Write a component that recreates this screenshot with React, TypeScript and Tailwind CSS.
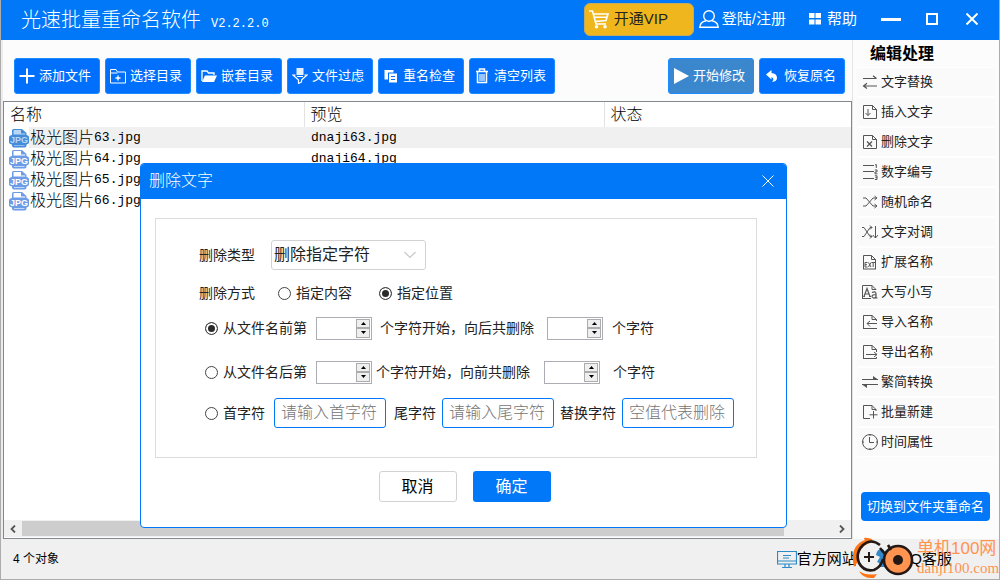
import { useState, type ReactNode } from "react";

const files = ["63", "64", "65", "66"];

function Glyph({ children, className = "size-4", box = "0 0 16 16" }: { children: ReactNode; className?: string; box?: string }) {
  return (
    <svg viewBox={box} className={`shrink-0 ${className}`} fill="none" stroke="currentColor" strokeWidth="1" aria-hidden="true">
      {children}
    </svg>
  );
}

function ToolButton({ icon, label, active = false }: { icon: ReactNode; label: string; active?: boolean }) {
  return (
    <button
      type="button"
      className={`flex h-9 w-[86px] items-center gap-1 rounded-[3px] border border-[#1a8cff] pl-1 text-[13px] whitespace-nowrap text-white ${active ? "bg-[#3a87cd]" : "bg-[#0070fc]"}`}
    >
      {icon}
      <span>{label}</span>
    </button>
  );
}

const page = <path d="M14.5 5.5V14.5H1.5V1.5H10.5L14.5 5.5H10.5V1.5" />;

const sideItems: { label: string; icon: ReactNode }[] = [
  {
    label: "文字替换",
    icon: <path d="M1 4.5H14.5M11 1.8L14.5 4.5M15 12H1.5M5 9.3L1.5 12L5 14.6" strokeWidth="1.2" />,
  },
  {
    label: "插入文字",
    icon: (
      <g>
        {page}
        <path d="M6 5V11.5M3.5 9L6 11.5L8.5 9" />
      </g>
    ),
  },
  {
    label: "删除文字",
    icon: (
      <g>
        {page}
        <path d="M5 7.5L10 12.5M10 7.5L5 12.5" strokeWidth="1.3" />
      </g>
    ),
  },
  {
    label: "数字编号",
    icon: (
      <g>
        <path d="M1 1.5H12M1 7.5H12M1 14.5H12" />
        <path d="M13 1L14.3 .5V4M12.8 6H15V8H13V9.8H15.4M12.8 11.8H15V15.5H12.8M13.4 13.6H15" />
      </g>
    ),
  },
  {
    label: "随机命名",
    icon: <path d="M1 4H4L11 12H15M1 12H4L11 4H15M12.5 2L15 4L12.5 6M12.5 10L15 12L12.5 14" />,
  },
  {
    label: "文字对调",
    icon: <path d="M0 3.5H2L8 12.5H10M0 12.5H2L8 3.5H10M8 1.5L10 3.5L8 5.5M8 10.5L10 12.5L8 14.5M13.5 2V14L10.8 11M13.5 14L16 11" />,
  },
  {
    label: "扩展名称",
    icon: (
      <g>
        <path d="M1.5 7V1.5H9.5L13.5 5.5V7M9.5 1.5V5.5H13.5M1 15H14" />
        <path d="M1.5 7V15M13.5 7V15M5.5 8.5H3V13H5.5M3 10.7H5M6.5 8.5L9 13M9 8.5L6.5 13M9.5 8.5H13M11.2 8.5V13" />
      </g>
    ),
  },
  {
    label: "大写小写",
    icon: (
      <g>
        <path d="M.5 14.5V1.5H10L14 5.5M10 1.5V5.5H14M0 14.5H9" />
        <path d="M2 12.5L5 4.5L8 12.5M3 10H7M1.2 12.5H3M7 12.5H9" strokeWidth="1.2" />
        <path d="M10 8.5Q13.5 6.8 14 9.5V14H15.5M14 10.5Q9.8 10.5 10 12.8Q11.5 15.2 14 13" strokeWidth="1.2" />
      </g>
    ),
  },
  {
    label: "导入名称",
    icon: <path d="M1.5 14.5V1.5H10L14.5 5.5V7M10 1.5V5.5H14.5M15 9.5H5M8 7L5 9.5L8 12.5M1 14.5H15" />,
  },
  {
    label: "导出名称",
    icon: <path d="M1.5 14.5V1.5H10L14.5 5.5V8M10 1.5V5.5H14.5M4 10.5H15M12 8L15 10.5L12 13M1 14.5H14.5V13" />,
  },
  {
    label: "繁简转换",
    icon: (
      <g>
        <path d="M0 5.5H16M0 10.5H16" />
        <path d="M11 2L16 5.5H11ZM5 14L0 10.5H5Z" fill="currentColor" stroke="none" />
      </g>
    ),
  },
  {
    label: "批量新建",
    icon: <path d="M8 14.5H1.5V1.5H10L14 5.5V7M10 1.5V5.5H14M11.5 7V14.5M7.5 10.8H15.5" />,
  },
  {
    label: "时间属性",
    icon: (
      <g>
        <circle cx="8" cy="8" r="7.5" />
        <path d="M7.5 3V8.5H12M8 .5V2M8 14V15.5M.5 8H2M14 8H15.5" />
      </g>
    ),
  },
];

function JpgIcon({ tinted }: { tinted: boolean }) {
  return (
    <svg viewBox="0 0 20 20" className="size-5 shrink-0" aria-hidden="true">
      <path
        d="M3 7V2.5Q3 1 4.5 1H13L17.5 5V7Q20 7.5 20 9V14.5Q20 16 17.5 16.5V17.5Q17.5 19.5 15.5 19.5H5Q3 19.5 3 17.5V16.5Q0 16 0 14.5V9Q0 7.5 3 7Z"
        fill={tinted ? "#458ddb" : "#6d9ce6"}
      />
      <path d="M4.5 6.5V2.5Q4.5 2 5 2H12V5.5H16.2V6.5Z" fill={tinted ? "#b9d7f3" : "#fff"} />
      <path d="M5 17.5H15.5" stroke={tinted ? "#8dbdec" : "#c4d9f8"} />
      <text x="10" y="15" textAnchor="middle" fontFamily="Liberation Sans, sans-serif" fontSize="9" fontWeight="700" fill={tinted ? "#b9d7f3" : "#fff"}>
        JPG
      </text>
    </svg>
  );
}

function Radio({ name, label, checked, onPick }: { name: string; label: string; checked: boolean; onPick: () => void }) {
  return (
    <label className="flex items-center gap-[5px] whitespace-nowrap">
      <input
        type="radio"
        name={name}
        checked={checked}
        onChange={onPick}
        className="size-[13px] shrink-0 appearance-none rounded-full border border-[#444] bg-white checked:bg-[#2b2b2b] checked:shadow-[inset_0_0_0_2px_white]"
      />
      {label}
    </label>
  );
}

function Spinner({ label }: { label: string }) {
  const [value, setValue] = useState("");
  const step = (by: number) => setValue(String(Math.max(0, Number(value || 0) + by)));
  return (
    <span className="flex h-[23px] w-14 shrink-0 border border-[#abadb3] bg-white p-px">
      <input aria-label={label} value={value} onChange={(e) => setValue(e.target.value)} className="min-w-0 flex-1 bg-transparent px-1 outline-none" />
      <span className="flex w-[14px] flex-col">
        <button type="button" aria-label="增加" onClick={() => step(1)} className="flex flex-1 items-center justify-center border border-[#acacac] bg-[#efefef]">
          <svg viewBox="0 0 5 3" className="h-[3px] w-[5px]"><path d="M0 3L2.5 0L5 3Z" /></svg>
        </button>
        <button type="button" aria-label="减少" onClick={() => step(-1)} className="flex flex-1 items-center justify-center border border-[#acacac] bg-[#efefef]">
          <svg viewBox="0 0 5 3" className="h-[3px] w-[5px]"><path d="M0 0L2.5 3L5 0Z" /></svg>
        </button>
      </span>
    </span>
  );
}

function BlueInput({ label, placeholder }: { label: string; placeholder: string }) {
  return (
    <input
      aria-label={label}
      placeholder={placeholder}
      className="h-[30px] w-28 shrink-0 rounded-[3px] border border-[#0078f8] bg-white px-[6px] text-base font-light outline-none placeholder:text-[#757575]"
    />
  );
}

function DeleteDialog() {
  const [mode, setMode] = useState("position");
  const [rule, setRule] = useState("front");
  return (
    <section role="dialog" aria-labelledby="dialog-title" className="absolute top-[163px] left-[139px] w-[647px] overflow-hidden rounded-[4px] border border-[#0078f8] bg-white">
      <header className="flex h-[35px] items-center justify-between bg-[#0078f8] pr-3 pb-[2px] pl-2 text-white">
        <h2 id="dialog-title" className="text-base font-light">删除文字</h2>
        <button type="button" aria-label="关闭">
          <svg viewBox="0 0 12 12" className="size-3" stroke="white" strokeWidth="1"><path d="M.5 .5L11.5 11.5M11.5 .5L.5 11.5" /></svg>
        </button>
      </header>
      <form onSubmit={(e) => e.preventDefault()} className="pt-[19px] pr-[29px] pb-[25px] pl-[14px]">
        <div className="border border-[#dcdcdc] pt-[21px] pb-[29px] pl-[43px] text-sm text-[#222]">
          <div className="flex h-[30px] items-center gap-4">
            <label htmlFor="kind">删除类型</label>
            <div className="relative flex h-[30px] w-[155px] items-center">
              <select id="kind" className="h-full w-full appearance-none rounded-[3px] border border-[#d2d2d2] bg-white px-[2px] text-base">
                <option>删除指定字符</option>
              </select>
              <svg viewBox="0 0 12 8" className="pointer-events-none absolute right-[10px] h-2 w-3" fill="none" stroke="#c8c8c8" strokeWidth="1.2"><path d="M.5 1L6 6.5L11.5 1" /></svg>
            </div>
          </div>
          <div className="mt-[13px] flex h-5 items-center">
            <span className="mr-[23px]">删除方式</span>
            <Radio name="mode" label="指定内容" checked={mode === "content"} onPick={() => setMode("content")} />
            <span className="w-[27px]" />
            <Radio name="mode" label="指定位置" checked={mode === "position"} onPick={() => setMode("position")} />
          </div>
          <div className="mt-[13px] flex h-6 items-center pl-[6px] whitespace-nowrap">
            <Radio name="rule" label="从文件名前第" checked={rule === "front"} onPick={() => setRule("front")} />
            <span className="mr-2 ml-[9px]"><Spinner label="前起始位置" /></span>
            <span>个字符开始，向后共删除</span>
            <span className="mr-[9px] ml-[13px]"><Spinner label="向后删除数量" /></span>
            <span>个字符</span>
          </div>
          <div className="mt-5 flex h-6 items-center pl-[6px] whitespace-nowrap">
            <Radio name="rule" label="从文件名后第" checked={rule === "back"} onPick={() => setRule("back")} />
            <span className="mr-1 ml-[9px]"><Spinner label="后起始位置" /></span>
            <span>个字符开始，向前共删除</span>
            <span className="mr-[13px] ml-[14px]"><Spinner label="向前删除数量" /></span>
            <span>个字符</span>
          </div>
          <div className="mt-[14px] flex h-[30px] items-center pl-[6px] whitespace-nowrap">
            <Radio name="rule" label="首字符" checked={rule === "edge"} onPick={() => setRule("edge")} />
            <span className="ml-[9px]"><BlueInput label="首字符" placeholder="请输入首字符" /></span>
            <span className="mr-[6px] ml-2">尾字符</span>
            <BlueInput label="尾字符" placeholder="请输入尾字符" />
            <span className="mx-[6px]">替换字符</span>
            <BlueInput label="替换字符" placeholder="空值代表删除" />
          </div>
        </div>
        <div className="mt-[13px] flex justify-center gap-4 pl-[17px]">
          <button type="button" className="h-[31px] w-[78px] rounded-[3px] border border-[#d2d2d2] bg-white text-base text-black">取消</button>
          <button type="submit" className="h-[31px] w-[78px] rounded-[3px] bg-[#0078f8] text-base text-white">确定</button>
        </div>
      </form>
    </section>
  );
}

function Watermark() {
  return (
    <div className="pointer-events-none absolute right-[2px] bottom-0 flex items-center gap-[3px] text-[#ff9350]">
      <svg viewBox="0 0 62 42" className="h-[42px] w-[62px]" fill="none" aria-hidden="true">
        <path d="M2 30Q-3 9 13 3Q9 -1 20 2L21 5Q6 8 5 26Z" fill="#ff7414" />
        <path d="M7 34Q14 39 25 37L22 41Q11 42 7 34Z" fill="#ff7414" />
        <path d="M24 18Q25 11 31 12L34 16L31 24L34 30H27Q29 26 25 25L28 20Z" fill="#3588c9" />
        <path d="M28 8Q19 1 11 8Q3 16 7 26Q12 35 22 33Q29 30 31 22" stroke="#231815" strokeWidth="2.6" />
        <path d="M12 20H22M17 15V25" stroke="#231815" strokeWidth="2" />
        <circle cx="46" cy="23" r="14" fill="#ff9350" stroke="#231815" strokeWidth="2.6" />
        <path d="M28 11L33 17M36 8L39 13" stroke="#231815" strokeWidth="2.6" />
        <circle cx="46" cy="23" r="5" fill="#231815" />
      </svg>
      <div className="w-20 whitespace-nowrap">
        <div className="text-[17px] leading-5">单机100网</div>
        <div className="font-['Liberation_Serif',serif] text-[15px] leading-[18px]">danji100.com</div>
      </div>
    </div>
  );
}

export default function App() {
  return (
    <div className="relative flex h-screen flex-col overflow-hidden border-x border-b border-[#acacac] bg-[#fcfcfc] font-['Liberation_Sans','Noto_Sans_CJK_SC',sans-serif] text-black">
      <header className="flex h-10 shrink-0 items-center bg-[#0078f8] pl-5 text-white">
        <h1 className="text-xl font-light whitespace-nowrap">光速批量重命名软件</h1>
        <span className="mt-2 ml-[10px] font-['Liberation_Mono',monospace] text-xs">V2.2.2.0</span>
        <nav className="ml-auto flex items-center pr-[21px] pb-[2px] text-[15px] whitespace-nowrap">
          <button type="button" className="flex h-[33px] w-[110px] items-center gap-[5px] rounded-[6px] border border-[#c5a95f] bg-[#efb71d] pl-1 text-[#222]">
            <svg viewBox="0 0 20 19" className="h-[19px] w-5" fill="none" stroke="#fff" strokeWidth="1.6">
              <path d="M0 1H3.5L7 14H17M4 4H19L17 10.5L6 11.5M4.7 7.3H18" />
              <circle cx="7.5" cy="16.8" r="1" />
              <circle cx="16" cy="16.8" r="1" />
            </svg>
            开通VIP
          </button>
          <button type="button" className="ml-[5px] flex items-center gap-[3px]">
            <Glyph className="size-5" box="0 0 20 20">
              <circle cx="10" cy="7" r="5.3" strokeWidth="1.4" />
              <path d="M7 11.8Q1 13 .8 18.2H19.2Q19 13 13 11.8" strokeWidth="1.4" />
            </Glyph>
            登陆/注册
          </button>
          <button type="button" className="ml-[23px] flex items-center gap-[6px]">
            <Glyph className="size-3" box="0 0 12 12">
              <path d="M0 0H5.5V5H0ZM6.5 0H12V5H6.5ZM0 6.5H5.5V11.5H0ZM6.5 6.5H12V11.5H6.5Z" fill="#fff" stroke="none" />
            </Glyph>
            帮助
          </button>
          <button type="button" aria-label="最小化" className="ml-6 h-[3px] w-5 bg-white" />
          <button type="button" aria-label="最大化" className="ml-[25px] size-3 border-2 border-white" />
          <button type="button" aria-label="关闭窗口" className="ml-7">
            <Glyph className="size-3" box="0 0 12 12"><path d="M.5 .5L11.5 11.5M11.5 .5L.5 11.5" strokeWidth="2" /></Glyph>
          </button>
        </nav>
      </header>

      <div className="flex min-h-0 flex-1">
        <main className="flex min-w-0 flex-1 flex-col border-l-2 border-[#ececec]">
          <div className="flex items-center gap-[5px] pt-[18px] pr-[7px] pb-[7px] pl-[11px]">
            <ToolButton label="添加文件" icon={<Glyph className="size-4"><path d="M8 .5V15.5M.5 8H15.5" strokeWidth="2" /></Glyph>} />
            <ToolButton
              label="选择目录"
              icon={<Glyph><path d="M.5 15V1.5H6L7.5 4H15.5V15ZM.5 5H7.5" /><path d="M8 7.5V12.5M5.5 10H10.5" strokeWidth="1.4" /></Glyph>}
            />
            <ToolButton
              label="嵌套目录"
              icon={<Glyph><path d="M1 13V3H6L7.5 5H13V7" strokeWidth="1.3" /><path d="M4 7.5H16L13 14H1Z" fill="#fff" stroke="none" /></Glyph>}
            />
            <ToolButton
              label="文件过虑"
              icon={<Glyph><path d="M4.5 0H11.5V7H4.5Z" fill="#e6f1ff" stroke="none" /><path d="M3.5 7H1L6.5 12V15.5L9.5 14V12L15 7H12.5M5 8.5H11" strokeWidth="1.2" /></Glyph>}
            />
            <ToolButton
              label="重名检查"
              icon={<Glyph><path d="M1.5 2H10.5V4.5H5V11.5H1.5Z" fill="#fff" stroke="none" /><path d="M6 5.5H14V14.5H6Z" fill="#fff" stroke="none" /><path d="M8 8.5H12M8 11.5H12" stroke="#0070fc" /></Glyph>}
            />
            <ToolButton
              label="清空列表"
              icon={<Glyph><path d="M2 3.5H14M5.5 3V1H10.5V3M3.5 4V14.5H12.5V4" strokeWidth="1.5" /><path d="M6 6V13M8 6V13M10 6V13" strokeWidth="1.2" /></Glyph>}
            />
            <div className="ml-auto flex gap-[5px]">
              <ToolButton active label="开始修改" icon={<Glyph><path d="M1 0L16 8L1 16Z" fill="#fff" stroke="none" /></Glyph>} />
              <ToolButton
                label="恢复原名"
                icon={<Glyph><path d="M2 6.5L7.5 2V5Q13 5.5 13 10Q13 13.5 8 14Q11 11 7.5 9V11.5Z" fill="#fff" stroke="none" /></Glyph>}
              />
            </div>
          </div>
          <div className="flex min-h-0 flex-1 flex-col border border-[#828790] bg-white">
            <table className="w-full table-fixed border-collapse text-left text-base font-light">
              <thead>
                <tr className="h-[25px]">
                  <th className="w-[300px] border-r border-[#e2e2e2] p-0 pl-[6px] leading-6 font-light">名称</th>
                  <th className="w-[300px] border-r border-[#e2e2e2] p-0 pl-[6px] leading-6 font-light">预览</th>
                  <th className="p-0 pl-[6px] leading-6 font-light">状态</th>
                </tr>
              </thead>
              <tbody>
                {files.map((n, i) => (
                  <tr key={n} className="h-[21px]">
                    <td className="p-0 pl-[5px]">
                      <div className="flex h-[21px] items-center">
                        <JpgIcon tinted={i === 0} />
                        <span className={`flex h-full flex-1 items-center pl-px ${i === 0 ? "bg-[#f0f0f0]" : ""}`}>
                          极光图片<span className="font-['Liberation_Mono',monospace] text-[13px]">{n}.jpg</span>
                        </span>
                      </div>
                    </td>
                    <td className={`p-0 pl-[7px] align-middle font-['Liberation_Mono',monospace] text-[13px] leading-5 ${i === 0 ? "bg-[#f0f0f0]" : ""}`}>dnaji{n}.jpg</td>
                    <td className={`p-0 ${i === 0 ? "bg-[#f0f0f0]" : ""}`} />
                  </tr>
                ))}
              </tbody>
            </table>
            <div className="mt-auto mb-px flex h-[17px] items-center bg-[#f0f0f0] text-[#555]">
              <button type="button" aria-label="向左滚动" className="flex w-[18px] justify-center">
                <Glyph className="size-2" box="0 0 8 8"><path d="M6 .5L2.5 4L6 7.5" strokeWidth="1.8" /></Glyph>
              </button>
              <div className="flex h-[15px] flex-1"><div className="w-[94%] bg-[#cdcdcd]" /></div>
              <button type="button" aria-label="向右滚动" className="flex w-[18px] justify-center">
                <Glyph className="size-2" box="0 0 8 8"><path d="M2 .5L5.5 4L2 7.5" strokeWidth="1.8" /></Glyph>
              </button>
            </div>
          </div>
        </main>

        <aside className="flex w-[147px] shrink-0 flex-col border-l border-[#e4e4e4] pr-1 pl-1">
          <h2 className="h-[27px] pl-[13px] text-base leading-7 font-bold">编辑处理</h2>
          <ul>
            {sideItems.map((item) => (
              <li key={item.label}>
                <button type="button" className="flex h-[30px] w-full items-center gap-[3px] rounded-[3px] border-y border-white bg-[#fafafa] pl-[5px] text-[13px] text-[#222]">
                  <span className="flex text-[#555]"><Glyph>{item.icon}</Glyph></span>
                  {item.label}
                </button>
              </li>
            ))}
          </ul>
          <button type="button" className="mt-auto mr-[5px] mb-[18px] ml-1 h-[29px] rounded-[4px] bg-[#0078f8] text-[13px] whitespace-nowrap text-white">切换到文件夹重命名</button>
        </aside>
      </div>

      <footer className="flex h-10 shrink-0 items-center bg-[#f0f0f0] pr-[47px] pl-3">
        <span className="text-xs">4 个对象</span>
        <div className="ml-auto flex items-center gap-[22px] text-[15px] whitespace-nowrap">
          <a href="#site" className="flex items-center">
            <Glyph className="size-5 text-[#2c8ac8]" box="0 0 20 20">
              <path d="M.5 2.5H19.5V15H.5ZM.5 12H19.5M6 6.5H14M6 9H12M8 15V18.5M12 15V18.5M5 18.5H15" strokeWidth="1.2" />
            </Glyph>
            官方网站
          </a>
          <a href="#service" className="flex items-center">
            <Glyph className="size-5 text-[#2c8ac8]" box="0 0 20 20">
              <path d="M5 8Q5 1 10 1Q15 1 15 8Q18 12 17 15L15 13Q14 17 10 17Q6 17 5 13L3 15Q2 12 5 8ZM5 9Q10 12 15 9" strokeWidth="1.4" />
            </Glyph>
            QQ客服
          </a>
        </div>
      </footer>

      <DeleteDialog />
      <Watermark />
    </div>
  );
}
